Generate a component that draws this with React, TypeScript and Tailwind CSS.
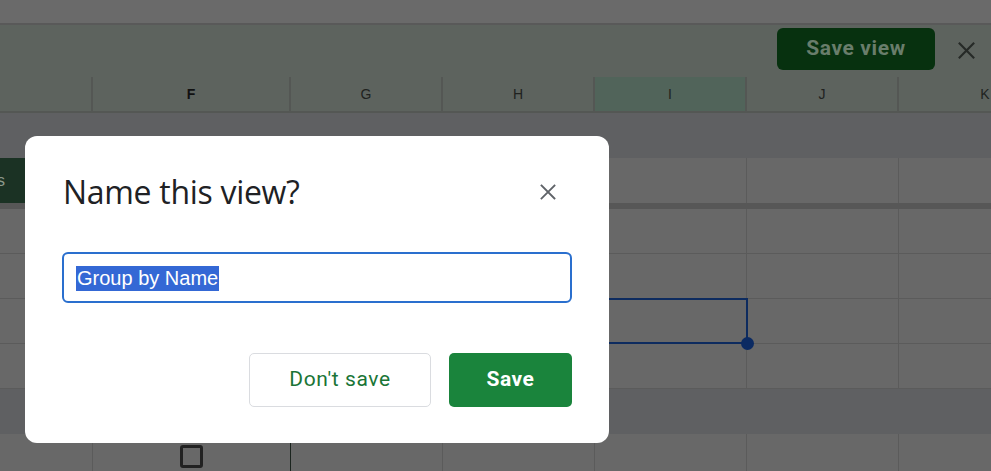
import React from "react";

const COLS = ["", "F", "G", "H", "I", "J", "K"];
const gridCols = "grid grid-cols-[93px_198px_152px_152px_152px_152px_1fr]";

function CellRow({ children }: { children?: React.ReactNode }) {
  return (
    <div className={`${gridCols} h-[45px] shrink-0 relative`}>
      {COLS.map((c, i) => (
        <div
          key={i}
          className={`bg-[#686868] border-b border-[#5b5b5b] ${i < 6 ? "border-r border-r-[#5b5b5b]" : ""}`}
        />
      ))}
      {children}
    </div>
  );
}

function XIcon({ size, color, stroke }: { size: number; color: string; stroke: number }) {
  return (
    <svg width={size} height={size} viewBox="0 0 16 16" fill="none">
      <path d="M1.5 1.5 L14.5 14.5 M14.5 1.5 L1.5 14.5" stroke={color} strokeWidth={stroke} strokeLinecap="square" />
    </svg>
  );
}

export default function App() {
  return (
    <div className="relative w-[991px] h-[471px] overflow-hidden bg-[#656565] flex flex-col font-['Liberation_Sans',Arial,sans-serif]">
      {/* top strip */}
      <div className="h-[25px] shrink-0 bg-[#6a6a6a] border-b-2 border-[#595959]" />
      {/* toolbar */}
      <div className="h-[52px] shrink-0 bg-[#5d635e] flex items-center justify-end pr-[16px]">
        <div className="h-[42px] w-[158px] rounded-[6px] bg-[#07310f] flex items-center justify-center text-[21px] tracking-[0.6px] font-bold text-[#697d6b] font-['Roboto',sans-serif] -mt-[4px]">
          Save view
        </div>
        <div className="ml-[23px] -mt-[2px]">
          <XIcon size={17} color="#262a27" stroke={2} />
        </div>
      </div>
      {/* column headers */}
      <div className={`${gridCols} h-[36px] shrink-0`}>
        {COLS.map((c, i) => (
          <div
            key={i}
            className={`flex items-center justify-center text-[14px] border-b-2 border-[#545754] ${
              i < 6 ? "border-r-2 border-r-[#545754]" : ""
            } ${i === 4 ? "bg-[#51645a]" : "bg-[#5d635e]"} ${
              i === 1 ? "font-bold text-[#111111]" : "text-[#202220]"
            } ${i === 6 ? "pl-[80px]" : ""}`}
          >
            {c}
          </div>
        ))}
      </div>
      {/* band */}
      <div className="h-[45px] shrink-0 bg-[#5f6062]" />
      {/* row with green chip */}
      <div className={`${gridCols} h-[45px] shrink-0 relative`}>
        {COLS.map((c, i) => (
          <div key={i} className={`bg-[#686868] ${i < 6 ? "border-r border-[#5b5b5b]" : ""}`}>
            {i === 0 && (
              <div className="h-[45px] w-[26px] bg-[#1b3224] flex items-center overflow-hidden">
                <span className="text-[#8c998c] text-[16px] -ml-[3px]">s</span>
              </div>
            )}
          </div>
        ))}
      </div>
      {/* frozen line */}
      <div className="h-[6px] shrink-0 bg-[#575757]" />
      <CellRow />
      <CellRow />
      <div className="relative z-10 flex flex-col">
        <CellRow>
          <div className="absolute left-[93px] w-[655px] top-[-1px] h-[46px] border-2 border-[#0d2b5f]" />
          <div className="absolute left-[741px] top-[38px] w-[13px] h-[13px] rounded-full bg-[#0b2a62]" />
        </CellRow>
      </div>
      <CellRow />
      {/* band */}
      <div className="h-[45px] shrink-0 bg-[#5f6062]" />
      <div className={`${gridCols} h-[45px] shrink-0`}>
        {COLS.map((c, i) => (
          <div
            key={i}
            className={`bg-[#686868] ${i < 6 ? "border-r" : ""} ${
              i === 1 ? "border-r-[#1b241e] flex justify-center pt-[11px]" : "border-r-[#5b5b5b]"
            }`}
          >
            {i === 1 && <div className="w-[23px] h-[23px] rounded-[3px] border-[3px] border-[#222222]" />}
          </div>
        ))}
      </div>

      {/* dialog */}
      <div className="absolute z-20 left-[25px] top-[136px] w-[584px] h-[307px] rounded-[12px] bg-white flex flex-col px-[37px]">
        <div className="flex items-start justify-between mt-[36px]">
          <div className="text-[32px] leading-[40px] text-[#202124] font-['Open_Sans',sans-serif] ml-[1px] tracking-[-0.3px]">
            Name this view?
          </div>
          <div className="mt-[12px] mr-[16px]">
            <XIcon size={16} color="#5f6368" stroke={1.8} />
          </div>
        </div>
        <div className="mt-[40px] h-[51px] rounded-[6px] border-2 border-[#2a6fce] flex items-center pl-[12px]">
          <span className="bg-[#3468d5] text-white text-[20px] leading-[25px] px-[1px] mt-[2px]">Group by Name</span>
        </div>
        <div className="flex justify-end gap-[18px] mt-[50px]">
          <div className="w-[182px] h-[54px] rounded-[5px] border border-[#dadce0] flex items-center justify-center text-[21px] tracking-[0.6px] text-[#1a7536] font-['Roboto',sans-serif] font-normal">
            Don't save
          </div>
          <div className="w-[123px] h-[54px] rounded-[5px] bg-[#1a843c] flex items-center justify-center text-[21px] tracking-[0.5px] text-white font-['Roboto',sans-serif] font-bold">
            Save
          </div>
        </div>
      </div>
    </div>
  );
}
